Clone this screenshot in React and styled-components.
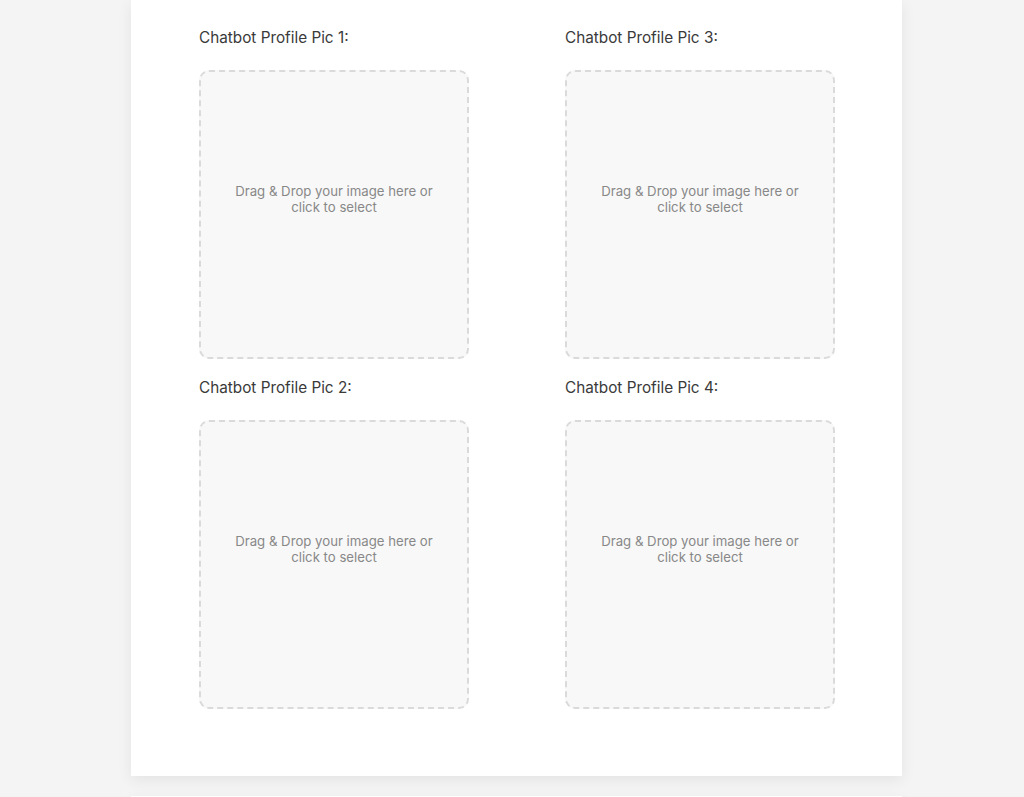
import styled, { createGlobalStyle } from 'styled-components'

const GlobalStyle = createGlobalStyle`
  html, body {
    margin: 0;
    padding: 0;
    background: #f4f4f4;
    font-family: Inter, "Noto Sans", sans-serif;
  }
`

const Page = styled.div`
  display: flex;
  flex-direction: column;
  align-items: center;
  gap: 20px;
  padding-left: 9px;
`

const Card = styled.section`
  width: 771px;
  box-sizing: border-box;
  background: #fff;
  padding: 28px 68px 67px;
  box-shadow: 0 4px 14px rgba(0, 0, 0, 0.07);
`

const Grid = styled.div`
  display: grid;
  grid-template-columns: 270px 270px;
  grid-auto-flow: column;
  grid-template-rows: auto auto;
  column-gap: 96px;
  row-gap: 19px;
`

const Field = styled.div`
  display: flex;
  flex-direction: column;
  gap: 22px;
`

const Label = styled.label`
  font-size: 15.3px;
  line-height: 20px;
  color: #3a3a3a;
`

const DropZone = styled.div`
  height: 289px;
  box-sizing: border-box;
  border: 2px dashed #dadada;
  border-radius: 10px;
  background: #f8f8f8;
  display: flex;
  align-items: center;
  justify-content: center;
  padding: 0 30px 32px;
  text-align: center;
  font-size: 13.2px;
  line-height: 16px;
  color: #888;
  cursor: pointer;
`

const NextCard = styled.div`
  width: 771px;
  height: 40px;
  background: #fff;
  box-shadow: 0 4px 14px rgba(0, 0, 0, 0.07);
`

const pics = [1, 2, 3, 4]

export default function App() {
  return (
    <>
      <GlobalStyle />
      <Page>
        <Card>
          <Grid>
            {pics.map(n => (
              <Field key={n}>
                <Label>Chatbot Profile Pic {n}:</Label>
                <DropZone>Drag &amp; Drop your image here or click to select</DropZone>
              </Field>
            ))}
          </Grid>
        </Card>
        <NextCard />
      </Page>
    </>
  )
}
